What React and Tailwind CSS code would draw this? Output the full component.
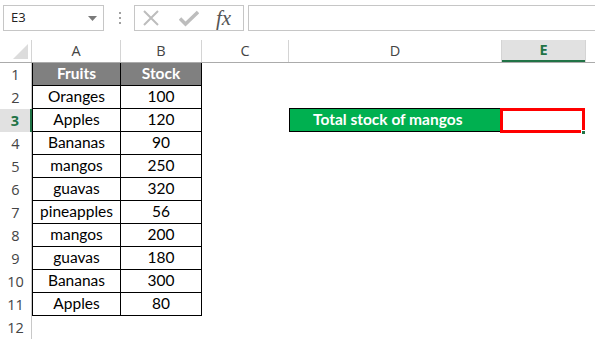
const fruits = [
  ['Oranges', 100],
  ['Apples', 120],
  ['Bananas', 90],
  ['mangos', 250],
  ['guavas', 320],
  ['pineapples', 56],
  ['mangos', 200],
  ['guavas', 180],
  ['Bananas', 300],
  ['Apples', 80],
]

const uiFont = { fontFamily: '"Open Sans", "DejaVu Sans", sans-serif' }
const cellFont = { fontFamily: 'Lato, "Open Sans", sans-serif' }

function FormulaBar() {
  return (
    <div className="flex h-[40px] items-start pt-[5px]" style={uiFont}>
      <div className="ml-[3px] flex h-[26px] w-[101px] items-center justify-between border border-[#c6c6c6] pl-[7px] pr-[6px] text-[13px] text-[#222]">
        <span>E3</span>
        <svg width="9" height="5" viewBox="0 0 9 5"><path d="M0 0h9L4.5 5z" fill="#7a7a7a" /></svg>
      </div>
      <div className="ml-[14px] flex h-[26px] w-[4px] flex-col items-center justify-center gap-[3px]">
        <span className="h-[2px] w-[2px] bg-[#a0a0a0]" />
        <span className="h-[2px] w-[2px] bg-[#a0a0a0]" />
        <span className="h-[2px] w-[2px] bg-[#a0a0a0]" />
      </div>
      <div className="ml-[12px] flex h-[26px] w-[110px] items-center border border-[#c6c6c6] pl-[7px]">
        <svg width="18" height="18" viewBox="0 0 18 18"><path d="M2 2l14 14M16 2L2 16" stroke="#bdbdbd" strokeWidth="2" /></svg>
        <svg className="ml-[19px]" width="20" height="17" viewBox="0 0 20 17"><path d="M1 8.5l5.5 5.5L19 2" stroke="#bdbdbd" strokeWidth="3.5" fill="none" /></svg>
        <span className="ml-[17px] text-[21px] italic leading-none text-[#555]" style={{ fontFamily: '"Liberation Serif", serif' }}>fx</span>
      </div>
      <div className="ml-[4px] h-[26px] flex-1 border border-r-0 border-[#c6c6c6]" />
    </div>
  )
}

function ColumnHeaders() {
  const cols = [
    ['A', 89],
    ['B', 81],
    ['C', 87],
    ['D', 213],
  ]
  return (
    <div className="flex h-[23px] border-b border-[#ababab] text-[14.5px] text-[#444]" style={uiFont}>
      <div className="relative w-[32px] border-r border-[#d4d4d4]">
        <svg className="absolute left-[13px] top-[4px]" width="15" height="15" viewBox="0 0 15 15"><path d="M15 0v15H0z" fill="#dcdcdc" /></svg>
      </div>
      {cols.map(([c, w]) => (
        <div key={c} className="flex items-center justify-center border-r border-[#d4d4d4]" style={{ width: w }}>{c}</div>
      ))}
      <div className="flex w-[83px] items-center justify-center border-b-2 border-[#217346] bg-[#e1e1e1] font-bold text-[#217346]">E</div>
      <div className="flex-1 border-l border-[#d4d4d4]" />
    </div>
  )
}

function RowNum({ n, active }) {
  return (
    <div
      className={`flex h-[23px] w-[32px] items-center justify-center text-[14.5px] ${
        active ? 'border-r-2 border-[#217346] bg-[#e1e1e1] font-bold text-[#217346]' : 'border-r border-[#c8c8c8] text-[#444]'
      }`}
      style={uiFont}
    >
      {n}
    </div>
  )
}

export default function App() {
  return (
    <div className="relative h-[341px] w-[595px] overflow-hidden bg-white">
      <FormulaBar />
      <ColumnHeaders />

      <div className="flex">
        <RowNum n={1} />
        <div className="flex h-[23px] w-[89px] items-center justify-center border-x border-b border-black bg-[#808080] text-[15.5px] font-bold text-white" style={cellFont}>Fruits</div>
        <div className="flex h-[23px] w-[81px] items-center justify-center border-r border-b border-black bg-[#808080] text-[15.5px] font-bold text-white" style={cellFont}>Stock</div>
      </div>

      {fruits.map(([name, qty], i) => (
        <div key={i} className="flex">
          <RowNum n={i + 2} active={i === 1} />
          <div className="flex h-[23px] w-[89px] items-center justify-center border-x border-b border-black text-[15.5px] text-black" style={cellFont}>{name}</div>
          <div className="flex h-[23px] w-[81px] items-center justify-center border-r border-b border-black text-[15.5px] text-black" style={cellFont}>{qty}</div>
          {i === 1 && (
            <div className="ml-[87px] mt-[-1px] flex h-[24px] w-[213px] items-center border border-black bg-[#00b050] pl-[23px] text-[15.5px] font-bold text-white" style={cellFont}>
              Total stock of mangos
            </div>
          )}
        </div>
      ))}

      <div className="flex">
        <RowNum n={12} />
      </div>

      <div className="absolute left-[500px] top-[108px] h-[25px] w-[85px] border-[3px] border-[#ff0000]" />
      <div className="absolute left-[581px] top-[130px] h-[5px] w-[5px] border border-white bg-[#217346]" />
    </div>
  )
}
